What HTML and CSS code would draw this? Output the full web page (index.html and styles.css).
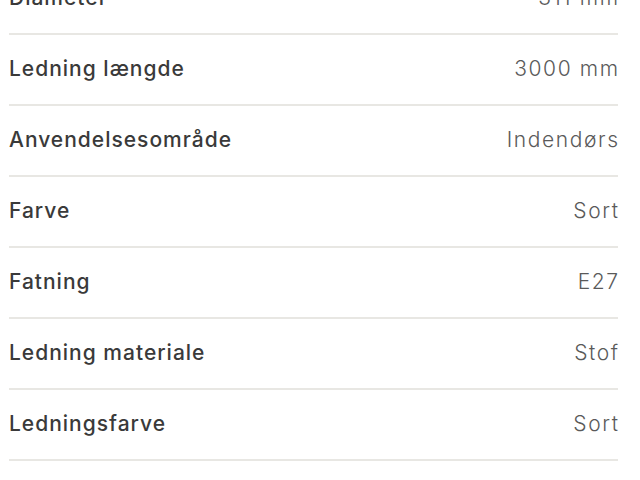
FILE: index.html
```html
<!DOCTYPE html>
<html lang="da">
<head>
<meta charset="utf-8">
<link rel="stylesheet" href="styles.css">
</head>
<body>
<div class="specs">
  <div class="row"><span class="label">Diameter</span><span class="value">311 mm</span></div>
  <div class="row"><span class="label">Ledning længde</span><span class="value">3000 mm</span></div>
  <div class="row"><span class="label">Anvendelsesområde</span><span class="value">Indendørs</span></div>
  <div class="row"><span class="label">Farve</span><span class="value">Sort</span></div>
  <div class="row"><span class="label">Fatning</span><span class="value">E27</span></div>
  <div class="row"><span class="label">Ledning materiale</span><span class="value">Stof</span></div>
  <div class="row"><span class="label">Ledningsfarve</span><span class="value">Sort</span></div>
</div>
</body>
</html>
```
FILE: styles.css
```css
html, body {
  margin: 0;
  padding: 0;
  background: #ffffff;
  overflow: hidden;
}
.specs {
  margin-top: -36px;
  padding: 0 22px 0 9px;
  display: flex;
  flex-direction: column;
}
.row {
  height: 66px;
  padding-bottom: 3px;
  display: flex;
  align-items: center;
  justify-content: space-between;
  border-bottom: 2px solid #e8e7e3;
}
.label {
  font-family: Inter, "Noto Sans", sans-serif;
  font-weight: 500;
  font-size: 21px;
  letter-spacing: 1px;
  color: #3a3a3a;
}
.value {
  font-family: Inter, "Noto Sans", sans-serif;
  font-weight: 300;
  font-size: 21px;
  letter-spacing: 1.6px;
  margin-right: -1.6px;
  color: #5a5a5a;
}
```
